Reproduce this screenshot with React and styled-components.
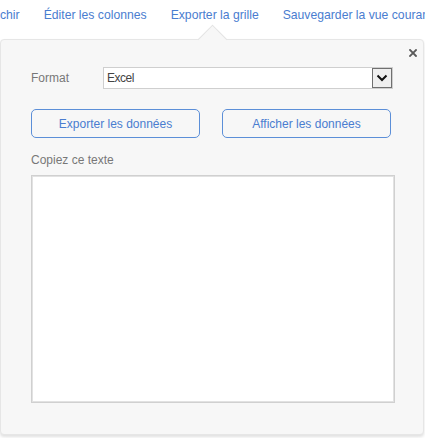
import React from "react";
import styled, { createGlobalStyle } from "styled-components";

const Global = createGlobalStyle`
  html, body { margin: 0; padding: 0; background: #ffffff; }
  body { font-family: "Liberation Sans", Arial, sans-serif; overflow: hidden; }
  * { box-sizing: border-box; }
`;

const Page = styled.div`
  width: 425px;
  height: 438px;
  overflow: hidden;
  position: relative;
`;

const Nav = styled.nav`
  display: flex;
  gap: 24px;
  height: 31px;
  align-items: center;
  padding-left: 0;
  white-space: nowrap;
  padding-bottom: 1px;
`;

const NavLink = styled.a`
  font-size: 12.2px;
  color: #4a7dd0;
  text-decoration: none;
  flex-shrink: 0;
`;

const Popover = styled.div`
  position: relative;
  margin: 8px 1px 0 0;
  height: 396px;
  background: #f7f7f7;
  border: 1px solid #e6e6e6;
  border-radius: 4px;
  box-shadow: 0 2px 3px rgba(0, 0, 0, 0.12);
  padding: 27px 30px 0 30px;
`;

const Arrow = styled.div`
  position: absolute;
  top: -11px;
  left: 201px;
  width: 21px;
  height: 21px;
  background: #f7f7f7;
  border-left: 1px solid #e3e3e3;
  border-top: 1px solid #e3e3e3;
  transform: rotate(45deg);
`;

const Close = styled.button`
  position: absolute;
  top: 5px;
  right: 2px;
  width: 16px;
  height: 16px;
  padding: 0;
  border: none;
  background: transparent;
  display: flex;
  align-items: center;
  justify-content: center;
`;

const Row = styled.div`
  display: flex;
  align-items: center;
`;

const Label = styled.span`
  width: 72px;
  font-size: 12px;
  color: #777;
`;

const Select = styled.div`
  flex: 1;
  height: 22px;
  border: 1px solid #cfcfcf;
  background: #fff;
  display: flex;
  align-items: center;
  justify-content: space-between;
  padding-left: 3px;
`;

const SelectText = styled.span`
  font-family: "Liberation Sans", Arial, sans-serif;
  font-size: 12px;
  color: #444;
  letter-spacing: -0.5px;
`;

const DropBox = styled.span`
  width: 20px;
  height: 20px;
  border: 1px solid #707070;
  background: #efefef;
  display: flex;
  align-items: center;
  justify-content: center;
`;

const Buttons = styled.div`
  display: flex;
  justify-content: space-between;
  margin-top: 20px;
  padding-right: 2px;
`;

const Button = styled.button`
  width: 169px;
  height: 29px;
  border: 1px solid #5c8fd8;
  border-radius: 5px;
  background: #f7f7f7;
  color: #4a7dd0;
  font-family: "Liberation Sans", Arial, sans-serif;
  font-size: 12px;
  padding: 0;
`;

const Caption = styled.div`
  margin-top: 15px;
  font-size: 12px;
  color: #777;
`;

const TextBox = styled.textarea`
  display: block;
  margin-top: 8px;
  width: 364px;
  height: 228px;
  border: 1px solid #d0d0d0;
  box-shadow: inset 0 0 0 1px #e2e2e2;
  background: #fff;
  resize: none;
  outline: none;
`;

export default function App() {
  return (
    <Page>
      <Global />
      <Nav>
        <NavLink href="#">chir</NavLink>
        <NavLink href="#">Éditer les colonnes</NavLink>
        <NavLink href="#">Exporter la grille</NavLink>
        <NavLink href="#">Sauvegarder la vue courante</NavLink>
      </Nav>
      <Popover>
        <Arrow />
        <Close aria-label="Fermer">
          <svg width="8" height="8" viewBox="0 0 8 8">
            <path d="M1 1 L7 7 M7 1 L1 7" stroke="#5a5a5a" strokeWidth="1.8" strokeLinecap="square" />
          </svg>
        </Close>
        <Row>
          <Label>Format</Label>
          <Select>
            <SelectText>Excel</SelectText>
            <DropBox>
              <svg width="12" height="8" viewBox="0 0 12 8">
                <polyline points="1.5,1.5 6,6 10.5,1.5" fill="none" stroke="#111" strokeWidth="2" />
              </svg>
            </DropBox>
          </Select>
        </Row>
        <Buttons>
          <Button>Exporter les données</Button>
          <Button>Afficher les données</Button>
        </Buttons>
        <Caption>Copiez ce texte</Caption>
        <TextBox />
      </Popover>
    </Page>
  );
}
